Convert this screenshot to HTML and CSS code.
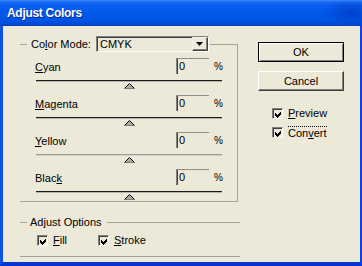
FILE: index.html
```html
<!DOCTYPE html>
<html>
<head>
<meta charset="utf-8">
<link rel="stylesheet" href="styles.css">
</head>
<body>
<div class="window">
  <div class="titlebar"><span class="title">Adjust Colors</span></div>
  <div class="frame">
    <div class="left">
      <fieldset class="group mode">
        <legend class="legend-mode">
          <div class="legend-inner">
            <span class="lbl">Co<u>l</u>or Mode:</span>
            <div class="select">
              <span class="sel-text">CMYK</span>
              <span class="sel-btn"><svg width="7" height="4" viewBox="0 0 7 4"><polygon points="0,0 7,0 3.5,4" fill="#000"/></svg></span>
            </div>
          </div>
        </legend>
        <div class="rows">
          <div class="row">
            <div class="row-top"><span class="rlbl"><u>C</u>yan</span><span class="num">0</span><span class="pct">%</span></div>
            <div class="track"></div>
            <div class="thumb"><svg width="11" height="6" viewBox="0 0 11 6"><polygon points="0.5,5.5 5.5,0.5 10.5,5.5" fill="#a9a9a3"/><polyline points="0.5,5.5 5.5,0.5 10.5,5.5" fill="none" stroke="#000"/><line x1="0" y1="5.5" x2="11" y2="5.5" stroke="#7a7a74"/></svg></div>
          </div>
          <div class="row">
            <div class="row-top"><span class="rlbl"><u>M</u>agenta</span><span class="num">0</span><span class="pct">%</span></div>
            <div class="track"></div>
            <div class="thumb"><svg width="11" height="6" viewBox="0 0 11 6"><polygon points="0.5,5.5 5.5,0.5 10.5,5.5" fill="#a9a9a3"/><polyline points="0.5,5.5 5.5,0.5 10.5,5.5" fill="none" stroke="#000"/><line x1="0" y1="5.5" x2="11" y2="5.5" stroke="#7a7a74"/></svg></div>
          </div>
          <div class="row">
            <div class="row-top"><span class="rlbl"><u>Y</u>ellow</span><span class="num">0</span><span class="pct">%</span></div>
            <div class="track light"></div>
            <div class="thumb"><svg width="11" height="6" viewBox="0 0 11 6"><polygon points="0.5,5.5 5.5,0.5 10.5,5.5" fill="#a9a9a3"/><polyline points="0.5,5.5 5.5,0.5 10.5,5.5" fill="none" stroke="#000"/><line x1="0" y1="5.5" x2="11" y2="5.5" stroke="#7a7a74"/></svg></div>
          </div>
          <div class="row">
            <div class="row-top"><span class="rlbl">Blac<u>k</u></span><span class="num">0</span><span class="pct">%</span></div>
            <div class="track"></div>
            <div class="thumb"><svg width="11" height="6" viewBox="0 0 11 6"><polygon points="0.5,5.5 5.5,0.5 10.5,5.5" fill="#a9a9a3"/><polyline points="0.5,5.5 5.5,0.5 10.5,5.5" fill="none" stroke="#000"/><line x1="0" y1="5.5" x2="11" y2="5.5" stroke="#7a7a74"/></svg></div>
          </div>
        </div>
      </fieldset>
      <fieldset class="group opts">
        <legend class="legend-opts">Adjust Options</legend>
        <div class="checks">
          <div class="check fill"><span class="box"><svg width="7" height="7" viewBox="0 0 7 7"><polygon points="0,2 2,4 6,0 6,3 2,7 0,5" fill="#000"/></svg></span><span class="clbl"><u>F</u>ill</span></div>
          <div class="check"><span class="box"><svg width="7" height="7" viewBox="0 0 7 7"><polygon points="0,2 2,4 6,0 6,3 2,7 0,5" fill="#000"/></svg></span><span class="clbl"><u>S</u>troke</span></div>
        </div>
      </fieldset>
    </div>
    <div class="right">
      <div class="btn ok">OK</div>
      <div class="btn cancel">Cancel</div>
      <div class="vchecks">
        <div class="check"><span class="box"><svg width="7" height="7" viewBox="0 0 7 7"><polygon points="0,2 2,4 6,0 6,3 2,7 0,5" fill="#000"/></svg></span><span class="clbl"><u>P</u>review</span></div>
        <div class="check"><span class="box"><svg width="7" height="7" viewBox="0 0 7 7"><polygon points="0,2 2,4 6,0 6,3 2,7 0,5" fill="#000"/></svg></span><span class="clbl focus">Con<u>v</u>ert</span></div>
      </div>
    </div>
  </div>
</div>
</body>
</html>
```

FILE: styles.css
```css
* { box-sizing: border-box; }
html, body { margin: 0; padding: 0; }
body {
  width: 362px;
  height: 266px;
  overflow: hidden;
  font-family: "Liberation Sans", Arial, sans-serif;
  font-size: 11px;
  color: #000;
  background: #ece9d8;
}
.window {
  width: 362px;
  height: 266px;
  display: flex;
  flex-direction: column;
}
.titlebar {
  height: 26px;
  flex: none;
  display: flex;
  align-items: center;
  padding-left: 7px;
  background:
    radial-gradient(ellipse 30px 14px at 352px 12px, rgba(0, 40, 170, 0.45), rgba(0, 40, 170, 0) 100%),
    linear-gradient(to bottom, #3d8af7 0px, #1a6cf4 2px, #0a5ef0 5px, #0058ea 14px, #0053e2 21px, #0049d4 24px, #003cba 26px);
}
.title {
  color: #fff;
  font-weight: bold;
  font-size: 12px;
  letter-spacing: -0.3px;
  text-shadow: 1px 1px 0 #0a2a9a;
}
.frame {
  flex: 1;
  display: flex;
  background: #ece9d8;
  border-left: 3px solid #0c52e6;
  border-right: 2px solid #0846dc;
  border-bottom: 4px solid #0935cf;
  padding: 10px 0 0 17px;
}
.left {
  width: 219px;
  flex: none;
  display: flex;
  flex-direction: column;
}
.group {
  margin: 0;
  min-width: 0;
  border: 1px solid #a3a39a;
  border-left: none;
  padding: 0 0 0 7px;
}
.mode {
  width: 218px;
  padding-bottom: 1px;
}
.legend-mode {
  padding: 0 1px 0 4px;
}
.legend-inner {
  display: flex;
  align-items: center;
  height: 16px;
}
.select {
  margin-left: 5px;
  width: 113px;
  height: 16px;
  display: flex;
  align-items: stretch;
  border-top: 1px solid #808080;
  border-left: 1px solid #808080;
  border-right: 1px solid #fff;
  border-bottom: 1px solid #fff;
  box-shadow: inset 1px 1px 0 #404040;
}
.sel-text {
  flex: 1;
  padding-left: 3px;
  line-height: 14px;
}
.sel-btn {
  width: 16px;
  display: flex;
  align-items: center;
  justify-content: center;
  border-top: 1px solid #f4f3ee;
  border-left: 1px solid #f4f3ee;
  border-right: 1px solid #404040;
  border-bottom: 1px solid #404040;
  box-shadow: inset -1px -1px 0 #808080;
}
.rows {
  margin-left: 8px;
  width: 187px;
  padding-top: 6px;
  display: flex;
  flex-direction: column;
  gap: 6px;
}
.row {
  display: flex;
  flex-direction: column;
}
.row-top {
  height: 16px;
  display: flex;
  align-items: flex-end;
}
.rlbl {
  flex: 1;
  line-height: 13px;
}
.num {
  width: 33px;
  height: 16px;
  padding: 1px 0 0 2px;
  line-height: 13px;
  border-top: 1px solid #8e8e8a;
  border-left: 1px solid #808080;
  box-shadow: inset 1px 0 0 #404040;
}
.pct {
  width: 8px;
  margin-left: 5px;
  font-size: 10px;
  line-height: 12px;
  margin-bottom: 1px;
}
.track {
  margin: 6px 0 0 1px;
  width: 186px;
  height: 2px;
  border-top: 1px solid #1a1a1a;
  border-bottom: 1px solid #b5b4aa;
}
.track.light {
  border-top-color: #9c9c96;
  border-bottom-color: #d4d2c6;
}
.thumb {
  margin-top: 1px;
  height: 6px;
  display: flex;
  justify-content: center;
  padding-left: 1px;
}
.thumb svg { display: block; }
.opts {
  margin-top: 14px;
  width: 220px;
  border-right: none;
  padding-bottom: 10px;
}
.legend-opts {
  padding: 0 5px 0 3px;
  line-height: 13px;
}
.checks {
  display: flex;
  padding: 6px 0 0 10px;
}
.check {
  display: flex;
  align-items: center;
  height: 11px;
}
.check.fill { width: 61px; }
.box {
  width: 11px;
  height: 11px;
  flex: none;
  display: flex;
  align-items: center;
  justify-content: center;
  border-top: 1px solid #808080;
  border-left: 1px solid #808080;
  border-right: 1px solid #fff;
  border-bottom: 1px solid #fff;
  box-shadow: inset 1px 1px 0 #404040;
  padding: 1px 0 0 1px;
  background: #ece9d8;
}
.box svg { display: block; shape-rendering: crispEdges; }
.clbl {
  margin-left: 5px;
  line-height: 13px;
}
.clbl.focus {
  border-top: 1px dotted #000;
  line-height: 12px;
}
.right {
  margin-left: 19px;
  padding-top: 6px;
  display: flex;
  flex-direction: column;
}
.btn {
  width: 86px;
  height: 20px;
  display: flex;
  align-items: center;
  justify-content: center;
  border-top: 1px solid #fff;
  border-left: 1px solid #fff;
  border-right: 1px solid #404040;
  border-bottom: 1px solid #404040;
  box-shadow: inset -1px -1px 0 #808080;
}
.btn.ok {
  border: 1px solid #000;
  box-shadow: inset 1px 1px 0 #fff, inset -1px -1px 0 #808080;
}
.btn.cancel {
  margin-top: 9px;
}
.vchecks {
  margin-top: 17px;
  padding-left: 14px;
  display: flex;
  flex-direction: column;
  gap: 8px;
}
```
